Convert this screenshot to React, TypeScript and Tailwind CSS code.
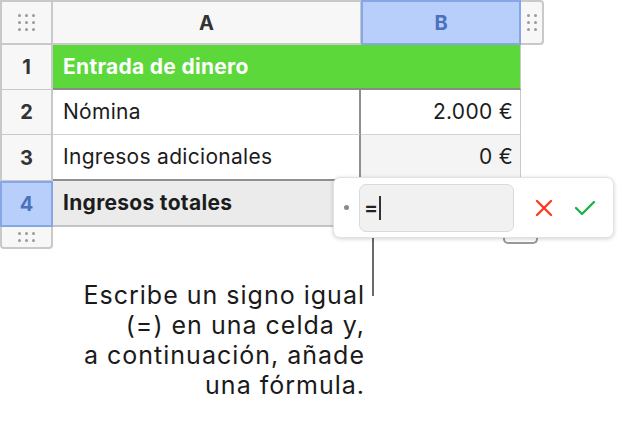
import React from 'react';

const font = { fontFamily: 'Inter, "Liberation Sans", sans-serif' };

const Dots: React.FC<{ cols: number; rows: number }> = ({ cols, rows }) => (
    <div className="grid gap-[4px]" style={{ gridTemplateColumns: `repeat(${cols}, 3px)` }}>
        {Array.from({ length: cols * rows }).map((_, i) => (
            <span key={i} className="w-[3px] h-[3px] rounded-full bg-[#9a9a9a]" />
        ))}
    </div>
);

const RowHead: React.FC<{ n: number; active?: boolean }> = ({ n, active }) => (
    <div
        className={`w-[53px] flex items-center justify-center text-[20px] font-bold ${
            active
                ? 'bg-[#b7cffa] border-2 border-[#86a6e6] text-[#4c71bd]'
                : 'bg-[#f7f7f7] border-l-2 border-r-2 border-b border-[#c9c9c9] text-[#333]'
        }`}
    >
        {n}
    </div>
);

const App: React.FC = () => {
    return (
        <div className="relative w-[630px] h-[428px] bg-white overflow-hidden text-[#1c1c1c]" style={font}>
            {/* header row */}
            <div className="flex h-[45px]">
                <div className="w-[53px] flex items-center justify-center bg-[#f7f7f7] border-2 border-[#c9c9c9]">
                    <Dots cols={3} rows={3} />
                </div>
                <div className="w-[308px] flex items-center justify-center bg-[#f7f7f7] border-t-2 border-b-2 border-r border-[#c9c9c9] text-[20px] font-bold text-[#333]">
                    A
                </div>
                <div className="w-[160px] flex items-center justify-center bg-[#b7cffa] border-2 border-[#86a6e6] text-[20px] font-bold text-[#4c71bd]">
                    B
                </div>
                <div className="w-[23px] flex items-center justify-center bg-[#f7f7f7] border-2 border-l-0 border-[#c9c9c9] rounded-r-[4px]">
                    <Dots cols={2} rows={3} />
                </div>
            </div>

            {/* row 1 */}
            <div className="flex h-[45px]">
                <RowHead n={1} />
                <div className="w-[468px] flex items-center pl-[10px] bg-[#5cd83a] border-b-2 border-[#8a8a8a] border-r border-r-[#c9c9c9] text-white text-[21px] tracking-[0.3px] font-bold">
                    Entrada de dinero
                </div>
            </div>

            {/* row 2 */}
            <div className="flex h-[45px]">
                <RowHead n={2} />
                <div className="w-[308px] flex items-center pl-[10px] border-b border-[#d3d3d3] border-r-2 border-r-[#8f8f8f] text-[21px] tracking-[0.3px]">
                    Nómina
                </div>
                <div className="w-[160px] flex items-center justify-end pr-[7px] border-b border-[#d3d3d3] border-r border-r-[#c9c9c9] text-[21px] tracking-[0.3px]">
                    2.000 €
                </div>
            </div>

            {/* row 3 */}
            <div className="flex h-[46px]">
                <RowHead n={3} />
                <div className="w-[308px] flex items-center pl-[10px] border-b-2 border-[#8f8f8f] border-r-2 border-r-[#8f8f8f] text-[21px] tracking-[0.3px]">
                    Ingresos adicionales
                </div>
                <div className="w-[160px] flex items-center justify-end pr-[7px] bg-[#f4f4f4] border-b-2 border-[#8f8f8f] border-r border-r-[#c9c9c9] text-[21px] tracking-[0.3px]">
                    0 €
                </div>
            </div>

            {/* row 4 */}
            <div className="flex h-[46px]">
                <RowHead n={4} active />
                <div className="w-[468px] flex items-center pl-[10px] bg-[#ebebeb] border-b-2 border-[#c4c4c4] text-[21px] tracking-[0.3px] font-bold">
                    Ingresos totales
                </div>
            </div>

            {/* bottom handles */}
            <div className="flex h-[22px]">
                <div className="w-[53px] flex items-center justify-center bg-[#f7f7f7] border-2 border-t-0 border-[#c9c9c9] rounded-b-[4px]">
                    <Dots cols={3} rows={2} />
                </div>
                <div className="w-[450px]" />
                <div className="w-[35px] h-[17px] border-2 border-t-0 border-[#9a9a9a] rounded-b-[5px]" />
            </div>

            {/* callout text */}
            <div className="w-[365px] mt-[31px] text-right text-[25px] leading-[30px] tracking-[1px] text-[#1a1a1a]">
                Escribe un signo igual
                <br />
                (=) en una celda y,
                <br />
                a continuación, añade
                <br />
                una fórmula.
            </div>

            {/* leader line */}
            <div className="absolute left-[372px] top-[232px] w-[2px] h-[64px] bg-[#6a6a6a]" />

            {/* formula editor */}
            <div className="absolute left-[333px] top-[177px] w-[281px] h-[61px] bg-white rounded-[7px] border border-[#e2e2e2] shadow-[0_1px_4px_rgba(0,0,0,0.18)] flex items-center">
                <span className="ml-[10px] w-[5px] h-[5px] rounded-full bg-[#8a8a8a]" />
                <div className="ml-[10px] w-[155px] h-[48px] rounded-[7px] bg-[#f1f1f1] border border-[#dadada] flex items-center pl-[4px]">
                    <span className="text-[21px] font-semibold text-[#222]">=</span>
                    <span className="ml-[1px] w-[2px] h-[24px] bg-[#333]" />
                </div>
                <svg className="ml-[20px]" width="20" height="20" viewBox="0 0 20 20">
                    <path d="M3 3 L17 17 M17 3 L3 17" stroke="#ff3b1f" strokeWidth="2.4" strokeLinecap="round" />
                </svg>
                <svg className="ml-[20px]" width="22" height="18" viewBox="0 0 22 18">
                    <path d="M2 9 L8 15 L20 3" stroke="#1fb14a" strokeWidth="2.4" fill="none" strokeLinecap="round" strokeLinejoin="round" />
                </svg>
            </div>
        </div>
    );
};

export default App;
